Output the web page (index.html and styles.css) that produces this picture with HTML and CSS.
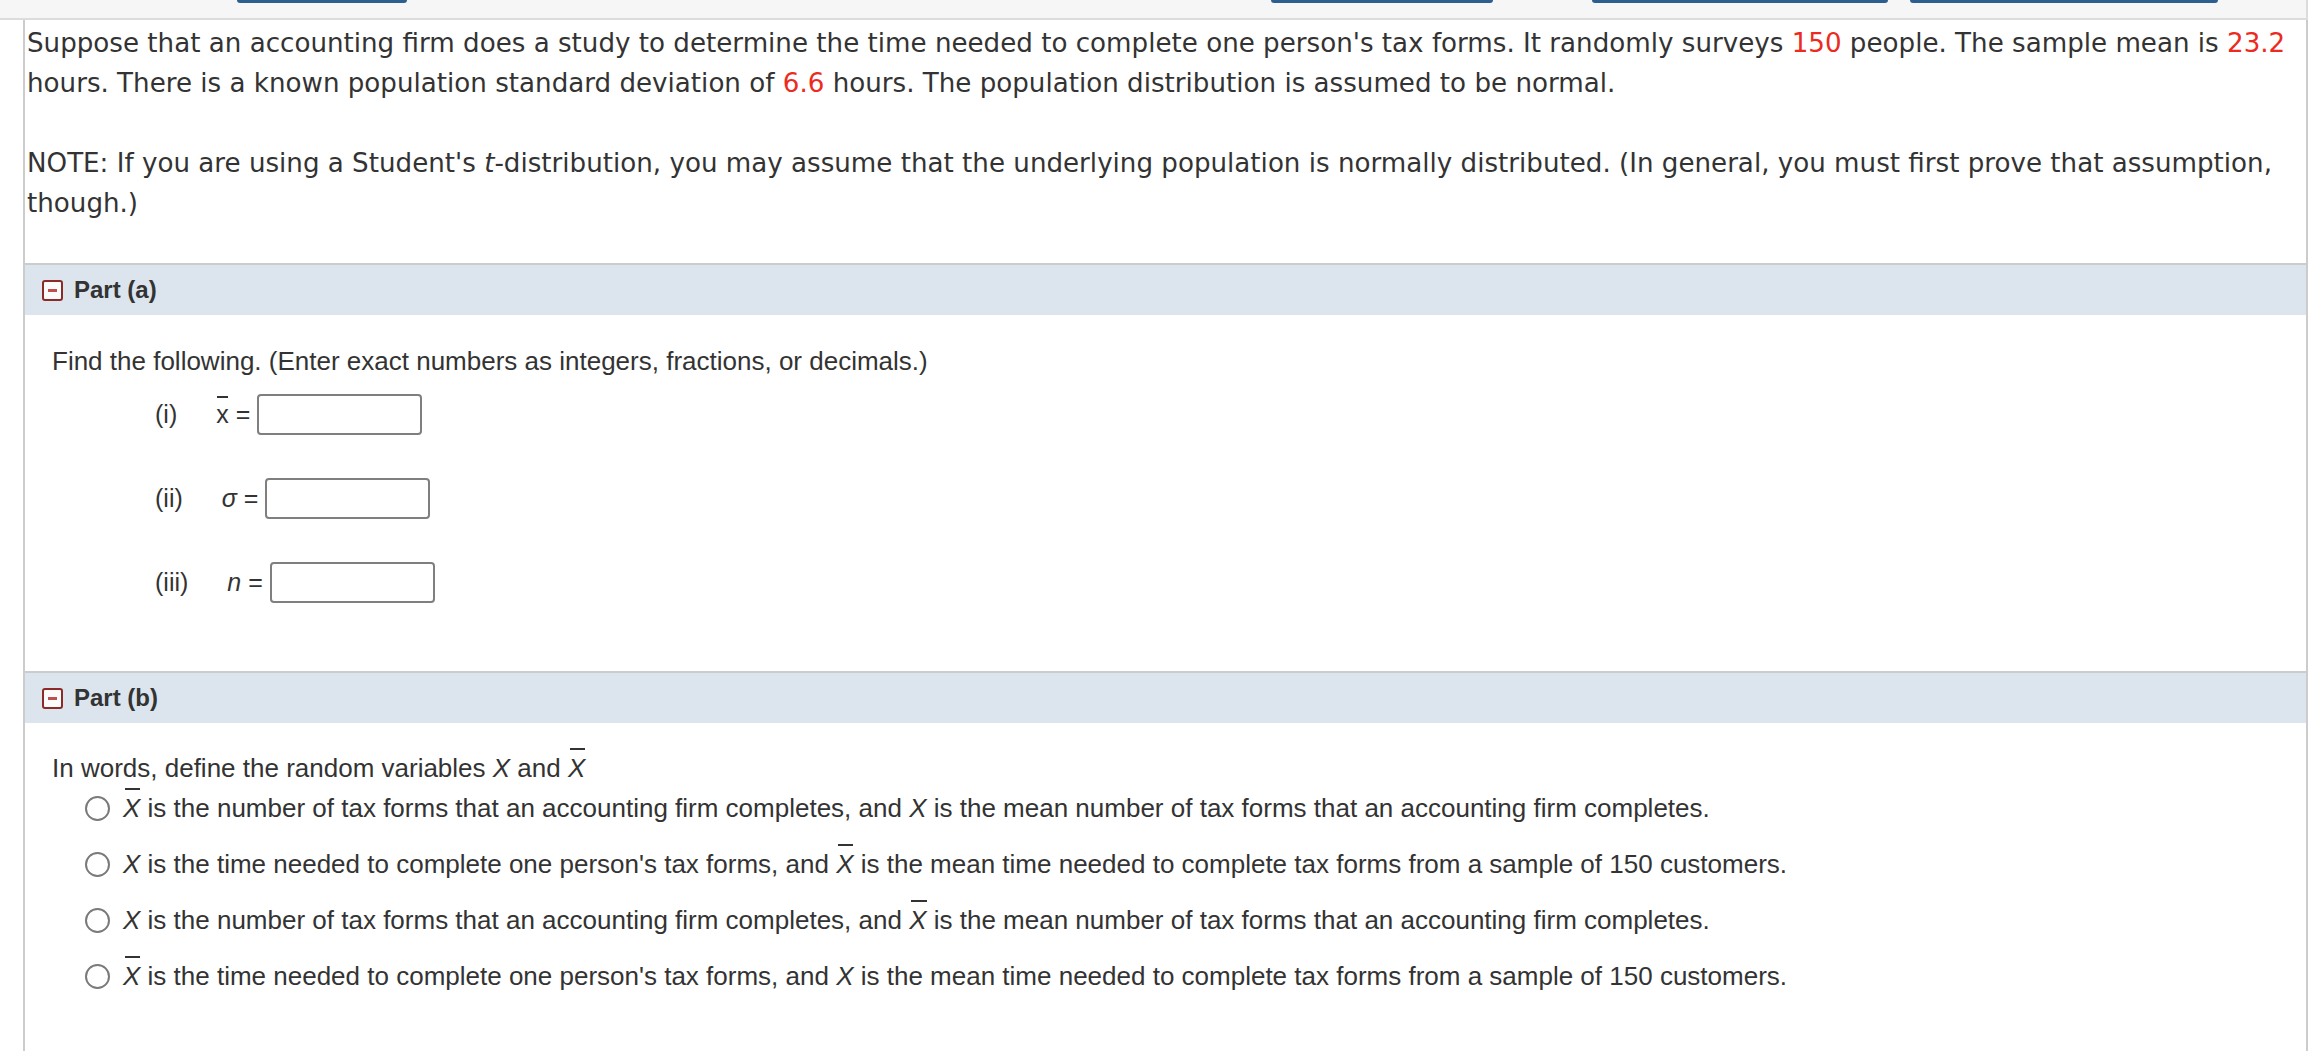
FILE: index.html
```html
<!DOCTYPE html>
<html>
<head>
<meta charset="utf-8">
<link rel="stylesheet" href="styles.css">
</head>
<body>
<div class="topbar">
  <span class="tbtn b1"></span>
  <span class="tbtn b2"></span>
  <span class="tbtn b3"></span>
  <span class="tbtn b4"></span>
</div>
<div class="question">
  <div class="stem">
    <p>Suppose that an accounting firm does a study to determine the time needed to complete one person's tax forms. It randomly surveys <span class="red">150</span> people. The sample mean is <span class="red">23.2</span> hours. There is a known population standard deviation of <span class="red">6.6</span> hours. The population distribution is assumed to be normal.</p>
    <p>NOTE: If you are using a Student's <i>t</i>-distribution, you may assume that the underlying population is normally distributed. (In general, you must first prove that assumption, though.)</p>
  </div>

  <div class="part-head">
    <span class="toggle"><span class="minus"></span></span>
    <span class="part-title">Part (a)</span>
  </div>
  <div class="part-body part-a">
    <div class="instr">Find the following. (Enter exact numbers as integers, fractions, or decimals.)</div>
    <div class="qrow r1"><span class="qlabel">(i)</span><span class="bar low">x</span> = <span class="ans"></span></div>
    <div class="qrow r2"><span class="qlabel">(ii)</span><i class="sym">σ</i> = <span class="ans"></span></div>
    <div class="qrow r3"><span class="qlabel">(iii)</span><i class="sym">n</i> = <span class="ans"></span></div>
  </div>

  <div class="part-head">
    <span class="toggle"><span class="minus"></span></span>
    <span class="part-title">Part (b)</span>
  </div>
  <div class="part-body part-b">
    <div class="instr">In words, define the random variables <i>X</i> and <i class="bar cap">X</i></div>
    <div class="options">
      <div class="opt"><span class="radio"></span><span class="otext"><i class="bar cap">X</i> is the number of tax forms that an accounting firm completes, and <i>X</i> is the mean number of tax forms that an accounting firm completes.</span></div>
      <div class="opt"><span class="radio"></span><span class="otext"><i>X</i> is the time needed to complete one person's tax forms, and <i class="bar cap">X</i> is the mean time needed to complete tax forms from a sample of 150 customers.</span></div>
      <div class="opt"><span class="radio"></span><span class="otext"><i>X</i> is the number of tax forms that an accounting firm completes, and <i class="bar cap">X</i> is the mean number of tax forms that an accounting firm completes.</span></div>
      <div class="opt"><span class="radio"></span><span class="otext"><i class="bar cap">X</i> is the time needed to complete one person's tax forms, and <i>X</i> is the mean time needed to complete tax forms from a sample of 150 customers.</span></div>
    </div>
  </div>
</div>
</body>
</html>
```

FILE: styles.css
```css
html, body {
  margin: 0;
  padding: 0;
  background: #ffffff;
}

body {
  font-family: "Liberation Sans", Arial, sans-serif;
  color: #333333;
  width: 2308px;
  height: 1051px;
  overflow: hidden;
}

.topbar {
  position: relative;
  height: 18px;
  background: #f6f6f6;
  border-bottom: 2px solid #dcdcdc;
  border-right: 2px solid #dcdcdc;
  box-sizing: content-box;
}

.tbtn {
  position: absolute;
  top: 0;
  height: 3px;
  background: #2c5e8f;
  border-radius: 0 0 4px 4px;
}
.b1 { left: 237px; width: 170px; }
.b2 { left: 1271px; width: 222px; }
.b3 { left: 1592px; width: 296px; }
.b4 { left: 1910px; width: 308px; }

.question {
  margin-left: 23px;
  width: 2281px;
  border-left: 2px solid #cccccc;
  border-right: 2px solid #cccccc;
  height: 1040px;
}

.stem {
  font-family: "DejaVu Sans", Verdana, sans-serif;
  font-size: 26.15px;
  line-height: 40px;
  color: #333333;
  padding: 3px 2px 0 2px;
}

.stem p {
  margin: 0 0 40px 0;
}

.red {
  color: #ec2a20;
}

.part-head {
  display: flex;
  align-items: center;
  height: 50px;
  background: #dce5ee;
  border-top: 2px solid #cccccc;
  padding-left: 17px;
}

.toggle {
  box-sizing: border-box;
  width: 21px;
  height: 21px;
  border: 2px solid #8b2a26;
  border-radius: 3px;
  background: #fbfbfb;
  display: flex;
  align-items: center;
  justify-content: center;
  margin-right: 11px;
}

.minus {
  width: 9px;
  height: 3px;
  background: #c0504d;
}

.part-title {
  font-weight: bold;
  font-size: 24px;
  color: #333333;
}

.part-body {
  padding-left: 27px;
  font-size: 26px;
  color: #333333;
}

.part-a {
  padding-top: 32px;
  padding-bottom: 68px;
}

.instr {
  line-height: 28px;
}

.qrow {
  display: flex;
  align-items: center;
  height: 41px;
  margin-left: 103px;
  white-space: pre;
  font-size: 25px;
}
.r1 { margin-top: 19px; }
.r2, .r3 { margin-top: 43px; }

.qlabel {
  margin-right: 39px;
}

.sym {
  font-style: italic;
}

.ans {
  box-sizing: border-box;
  width: 165px;
  height: 41px;
  border: 2px solid #7f7f7f;
  border-radius: 4px;
  background: #ffffff;
}

.bar {
  position: relative;
  display: inline-block;
}
.bar::before {
  content: "";
  position: absolute;
  left: 1px;
  right: 1px;
  height: 2px;
  background: currentColor;
}
.bar.low::before { top: -4px; }
.bar.cap::before { top: -6px; left: 2px; right: 0; }

.part-b {
  padding-top: 31px;
}

.options {
  margin-left: 33px;
  margin-top: -2px;
}

.opt {
  display: flex;
  align-items: center;
  height: 56px;
}

.radio {
  box-sizing: border-box;
  width: 25px;
  height: 25px;
  border: 2px solid #7a7a7a;
  border-radius: 50%;
  background: #ffffff;
  margin-right: 13px;
  flex: none;
}

.otext {
  line-height: 28px;
}
```
